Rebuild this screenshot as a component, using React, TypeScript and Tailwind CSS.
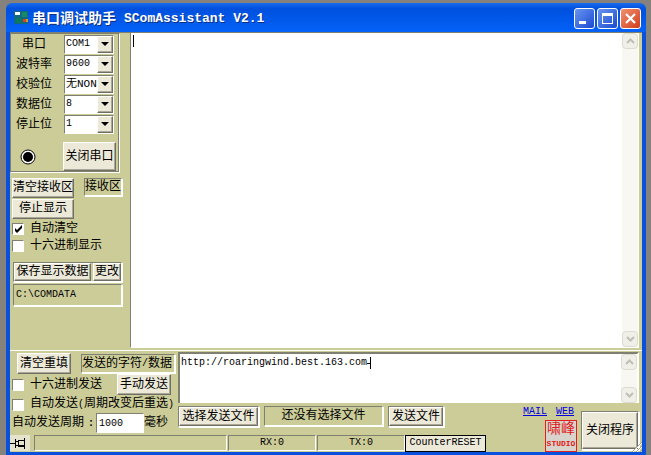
import React, { useState } from 'react'

const cjk = "font-['Liberation_Mono','Noto_Sans_CJK_SC',monospace]"

// Classic Win32 bevels
const raised = 'border border-t-white border-l-white border-r-[#716f64] border-b-[#716f64] shadow-[inset_-1px_-1px_0_#aca899]'
const sunken = 'border border-t-[#808070] border-l-[#808070] border-r-white border-b-white'
const framed = 'border border-t-[#808070] border-l-[#808070] border-r-white border-b-white shadow-[1px_1px_0_#fff]'

interface PortSetting {
  id: string
  label: string
  options: string[]
  size: string
}

const settings: PortSetting[] = [
  { id: 'port', label: '串口', options: ['COM1', 'COM2', 'COM3', 'COM4'], size: 'text-[10px]' },
  { id: 'baud', label: '波特率', options: ['9600', '19200', '38400'], size: 'text-[10px]' },
  { id: 'parity', label: '校验位', options: ['无NONE', '奇ODD', '偶EVEN'], size: 'text-[11px]' },
  { id: 'data', label: '数据位', options: ['8', '7', '6'], size: 'text-[10px]' },
  { id: 'stop', label: '停止位', options: ['1', '2'], size: 'text-[10px]' },
]

function Button({ children, className = '' }: { children: React.ReactNode; className?: string }) {
  return (
    <button className={`flex shrink-0 items-center justify-center whitespace-nowrap bg-[#ece9d8] ${raised} ${className}`}>
      {children}
    </button>
  )
}

function SettingRow({ setting }: { setting: PortSetting }) {
  return (
    <div className="flex h-5 items-center">
      <label htmlFor={setting.id} className="w-[52px] pl-1 pr-3 pt-px text-center whitespace-nowrap">
        {setting.label}
      </label>
      <div className={`relative flex h-[19px] w-[50px] bg-white ${sunken}`}>
        <select id={setting.id} className={`w-8 appearance-none overflow-hidden bg-white pl-px leading-4 outline-none ${setting.size}`}>
          {setting.options.map((option) => (
            <option key={option}>{option}</option>
          ))}
        </select>
        <span className={`pointer-events-none flex w-4 items-center justify-center bg-[#ece9d8] ${raised}`}>
          <svg width="8" height="4" viewBox="0 0 8 4">
            <path d="M0 0h8L4 4z" fill="#000" />
          </svg>
        </span>
      </div>
    </div>
  )
}

function CheckBox({ label, initial = false }: { label: React.ReactNode; initial?: boolean }) {
  const [checked, setChecked] = useState(initial)
  return (
    <label className="flex items-center gap-[6px] whitespace-nowrap">
      <span className="relative flex">
        <input
          type="checkbox"
          checked={checked}
          onChange={(e) => setChecked(e.target.checked)}
          className={`h-3 w-3 appearance-none bg-white ${sunken}`}
        />
        {checked && (
          <svg className="pointer-events-none absolute inset-0" width="12" height="12" viewBox="0 0 12 12">
            <path d="M3 5v3l2 2 5-5V2L5 7z" fill="#000" />
          </svg>
        )}
      </span>
      {label}
    </label>
  )
}

function ScrollButton({ up = false }: { up?: boolean }) {
  return (
    <button
      disabled
      aria-label={up ? 'Scroll up' : 'Scroll down'}
      className="flex h-4 w-4 items-center justify-center rounded-sm border border-[#dedcd0] bg-[#f1f0e8]"
    >
      <svg width="9" height="6" viewBox="0 0 9 6" fill="none" stroke="#c1bfb4" strokeWidth="2">
        <path d={up ? 'M1 5l3.500-3.500L8 5' : 'M1 1l3.500 3.500L8 1'} />
      </svg>
    </button>
  )
}

function ScrollBar() {
  return (
    <div className="flex w-4 shrink-0 flex-col justify-between bg-[#f8f7f2]">
      <ScrollButton up />
      <ScrollButton />
    </div>
  )
}

function TitleBar() {
  const box = 'flex h-[21px] w-[21px] items-center justify-center rounded-[3px] border border-white'
  return (
    <header className="flex h-[29px] shrink-0 items-center rounded-t-md bg-linear-to-b from-[#1a6cec] via-[#0050de] via-20% to-[#0462f8] pl-2 pr-[5px] text-white">
      <svg width="15" height="15" viewBox="0 0 15 15" className="mr-[3px]">
        <rect width="14" height="13" y="1" fill="#0f6a80" />
        <rect x="1" y="2" width="5" height="3" fill="#fff" />
        <rect x="8" y="2" width="5" height="5" fill="#168a68" />
        <rect x="2" y="8" width="6" height="5" fill="#0d7a60" />
        <rect x="9" y="9" width="3" height="3" fill="#d8402a" />
        <rect x="12" y="9" width="2" height="3" fill="#c8a030" />
      </svg>
      <h1 className="flex items-center gap-2 whitespace-nowrap pt-[2px] font-bold [text-shadow:1px_1px_0_#0a3080]">
        <span className="text-[14px]">串口调试助手</span>
        <span className="text-[13px]">SComAssistant V2.1</span>
      </h1>
      <div className="ml-auto flex gap-[2px] pt-px">
        <button aria-label="Minimize" className={`${box} bg-linear-to-br from-[#6a94f0] to-[#1c49d0]`}>
          <svg width="15" height="15" viewBox="0 0 15 15">
            <path d="M2 10h7v3H2z" fill="#fff" />
          </svg>
        </button>
        <button aria-label="Maximize" className={`${box} bg-linear-to-br from-[#6a94f0] to-[#1c49d0]`}>
          <svg width="15" height="15" viewBox="0 0 15 15">
            <path d="M2 2h11v11H2zM3 5v7h9V5z" fill="#fff" fillRule="evenodd" />
          </svg>
        </button>
        <button aria-label="Close" className={`${box} bg-linear-to-br from-[#f09070] to-[#d03a14]`}>
          <svg width="15" height="15" viewBox="0 0 15 15" stroke="#fff" strokeWidth="2.200">
            <path d="M3 3l9 9M12 3l-9 9" />
          </svg>
        </button>
      </div>
    </header>
  )
}

function SidePanel() {
  return (
    <aside className="flex w-[120px] shrink-0 flex-col">
      <section className="w-[110px] border border-t-[#808070] border-l-[#808070] border-r-white border-b-white pb-px pl-px shadow-[inset_-1px_-1px_0_#808070]">
        {settings.map((setting) => (
          <SettingRow key={setting.id} setting={setting} />
        ))}
        <div className="mt-2 flex items-center pl-2">
          <svg width="16" height="16" viewBox="0 0 16 16" role="img" aria-label="Port open">
            <circle cx="8" cy="8" r="7" fill="#fff" stroke="#000" />
            <circle cx="8" cy="8" r="5" fill="#000" />
          </svg>
          <Button className="ml-[27px] h-[29px] w-[53px]">关闭串口</Button>
        </div>
      </section>

      <div className="mt-[5px] flex justify-between pl-[2px] pr-2">
        <Button className="h-5 w-[62px]">清空接收区</Button>
        <div className={`flex h-[18px] w-[38px] items-center overflow-hidden whitespace-nowrap ${framed}`}>接收区</div>
      </div>
      <div className="mt-px pl-[2px]">
        <Button className="h-5 w-[62px]">停止显示</Button>
      </div>
      <div className="mt-[2px] flex flex-col gap-[1px] pl-[2px] leading-4">
        <CheckBox label="自动清空" initial />
        <CheckBox label="十六进制显示" />
      </div>
      <div className={`ml-[3px] mt-2 flex w-[109px] gap-[2px] ${framed}`}>
        <Button className="h-[18px] w-[77px]">保存显示数据</Button>
        <Button className="h-[18px] w-7">更改</Button>
      </div>
      <div className={`ml-[3px] mt-[2px] h-[22px] w-[109px] pl-[2px] text-[10px] leading-[19px] ${framed}`}>C:\COMDATA</div>
    </aside>
  )
}

function SendOptions() {
  return (
    <section className="row-span-2 flex flex-col pt-[2px]">
      <div className="flex items-center pl-[7px]">
        <Button className="h-[21px] w-[54px]">清空重填</Button>
        <div className={`ml-[10px] flex h-[19px] w-[94px] items-center whitespace-nowrap ${framed}`}>
          发送的字符<span className="text-[10px]">/</span>数据
        </div>
      </div>
      <div className="flex items-center pl-[2px]">
        <CheckBox label="十六进制发送" />
        <Button className="ml-auto mr-[7px] h-[21px] w-[54px]">手动发送</Button>
      </div>
      <div className="pl-[2px] pt-px leading-4">
        <CheckBox
          label={
            <span>
              自动发送<span className="text-[10px]">(</span>周期改变后重选<span className="text-[10px]">)</span>
            </span>
          }
        />
      </div>
      <div className="flex items-center pl-[2px] leading-4">
        <label htmlFor="period" className="w-[84px] whitespace-nowrap">
          自动发送周期<span className="pl-1 text-[10px] font-bold">:</span>
        </label>
        <input id="period" defaultValue="1000" className={`h-5 w-12 bg-white pl-[2px] text-[10px] outline-none ${sunken}`} />
        毫秒
      </div>
    </section>
  )
}

function StatusBar() {
  const cell = `h-4 text-center text-[10px] leading-[14px] ${sunken}`
  return (
    <div className="col-span-2 flex items-center">
      <button aria-label="Keep on top" className="flex h-4 w-5 items-center bg-[#e6e3cc]">
        <svg width="16" height="12" viewBox="0 0 16 12" fill="none" stroke="#000">
          <path d="M0 6.500h5M5.500 2v9M6 4.500h2M6 8.500h2M8.500 3v7M8 3.500h6M8 9.500h6M14.500 1v11M8 8.500h6" />
        </svg>
      </button>
      <div className={`ml-1 flex-1 ${cell}`} />
      <div className={`ml-px w-[88px] ${cell}`}>RX:0</div>
      <div className={`ml-px w-[88px] ${cell}`}>TX:0</div>
      <button className="mr-[35px] h-[17px] w-[81px] border border-black bg-[#ece9d8] text-[10px] leading-[14px]">CounterRESET</button>
    </div>
  )
}

export default function App() {
  return (
    <div className={`flex h-screen min-h-[400px] flex-col bg-[#85827d] pl-[6px] pr-[5px] pt-[3px] text-[12px] leading-[14px] text-black ${cjk}`}>
      <TitleBar />
      <main className="flex min-h-0 flex-1 flex-col border-x-4 border-b-[3px] border-[#0950dd] bg-[#cccc99]">
        <div className="flex min-h-0 flex-1 border-t border-[#808070]">
          <SidePanel />
          <div className="relative mr-[3px] flex flex-1 border border-t-0 border-[#808070] border-r-white border-b-white bg-white">
            <textarea aria-label="接收区" className="flex-1 resize-none bg-white p-[2px] text-[10px] outline-none" />
            <span className="pointer-events-none absolute left-[2px] top-[2px] h-3 w-px bg-black" />
            <ScrollBar />
          </div>
        </div>

        <div className="mt-[2px] grid grid-cols-[168px_1fr_121px] grid-rows-[52px_31px_18px] border-t border-white">
          <SendOptions />
          <div className="relative col-span-2 mr-[3px] mt-px flex border-2 border-b-0 border-[#808070] border-r-white bg-white">
            <textarea
              aria-label="发送的字符/数据"
              defaultValue="http://roaringwind.best.163.com"
              className="flex-1 resize-none bg-white px-px pt-px text-[10px] leading-4 outline-none"
            />
            <svg className="pointer-events-none absolute left-[187px] top-[3px]" width="5" height="12" viewBox="0 0 5 12">
              <path d="M3 0h1v12H3zM0 6h3v1H0z" fill="#000" />
            </svg>
            <ScrollBar />
          </div>

          <div className="flex items-start pt-[3px]">
            <div className={framed}>
              <Button className="h-[19px] w-[79px]">选择发送文件</Button>
            </div>
            <div className={`ml-[5px] flex h-5 flex-1 items-center justify-center whitespace-nowrap ${framed}`}>还没有选择文件</div>
            <div className={`ml-[5px] mr-[77px] ${framed}`}>
              <Button className="h-[19px] w-[54px]">发送文件</Button>
            </div>
          </div>

          <div className="row-span-2 flex justify-between pr-[3px] pt-[2px]">
            <div className="flex w-[56px] flex-col items-end">
              <nav className="flex w-full gap-[9px] pl-[2px] text-[10px] leading-[14px] text-[#0000e0] underline">
                <a href="#mail">MAIL</a>
                <a href="#web">WEB</a>
              </nav>
              <div className="mt-px flex h-8 w-8 flex-col items-center border border-[#e02020] bg-[#d8d4cc] text-[#e01818]">
                <span className="text-[14px] leading-4">啸峰</span>
                <span className="text-[8px] font-bold leading-[14px]">STUDIO</span>
              </div>
            </div>
            <div className={`relative mt-[6px] h-[39px] w-[58px] ${framed}`}>
              <Button className="h-[37px] w-[56px]">关闭程序</Button>
              <svg className="pointer-events-none absolute -bottom-[3px] -right-[4px]" width="11" height="11" viewBox="0 0 11 11" stroke="#a8a690">
                <path d="M1 11L11 1M5 11l6-6M9 11l2-2" />
                <path d="M2 11l9-9M6 11l5-5" stroke="#fff" />
              </svg>
            </div>
          </div>

          <StatusBar />
        </div>
      </main>
    </div>
  )
}
